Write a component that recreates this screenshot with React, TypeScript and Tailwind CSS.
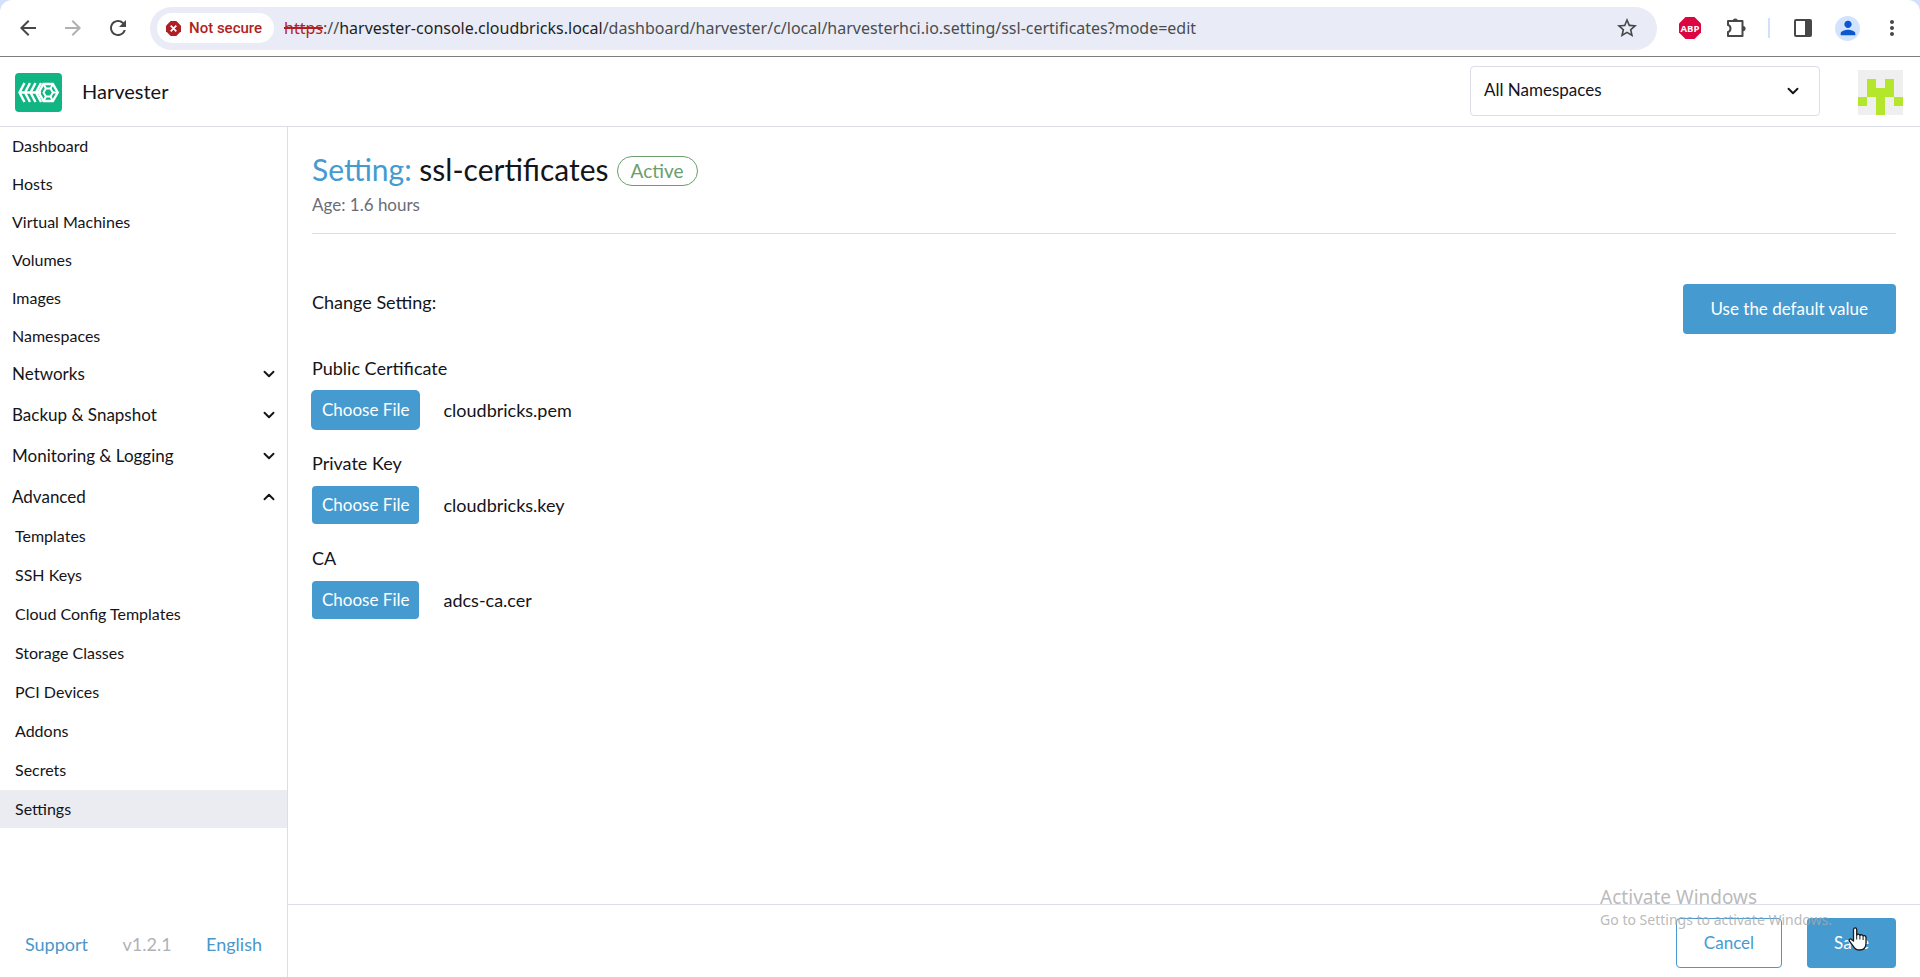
import { ChevronDown, ChevronUp } from "lucide-react";
import { MdArrowBack, MdArrowForward, MdRefresh, MdStarBorder, MdMoreVert, MdPerson } from "react-icons/md";

const topLinks = ["Dashboard", "Hosts", "Virtual Machines", "Volumes", "Images", "Namespaces"];
const groups = ["Networks", "Backup & Snapshot", "Monitoring & Logging"];
const advancedLinks = [
  "Templates",
  "SSH Keys",
  "Cloud Config Templates",
  "Storage Classes",
  "PCI Devices",
  "Addons",
  "Secrets",
  "Settings",
];
const files = [
  { id: "public-certificate", label: "Public Certificate", file: "cloudbricks.pem", focused: true },
  { id: "private-key", label: "Private Key", file: "cloudbricks.key", focused: false },
  { id: "ca", label: "CA", file: "adcs-ca.cer", focused: false },
];

function HarvesterLogo() {
  return (
    <svg viewBox="0 0 47 39" className="h-[39px] w-[47px] shrink-0" aria-hidden="true">
      <rect width="47" height="39" rx="4" fill="#11b583" />
      <g fill="none" stroke="#fff" strokeWidth="2.4">
        <path d="M9.500 10 4.500 19.500l5 9.500M15 10l-5 9.500 5 9.500M20.500 10l-5 9.500 5 9.500M26 10l-5 9.500 5 9.500M4 19.500h22" />
        <path d="M28.500 11h9.400l4.800 8.500-4.800 8.500h-9.400l-4.800-8.500z" />
        <path d="M30.900 15.500h4.600l2.400 4-2.400 4h-4.600l-2.400-4z" strokeWidth="2" />
        <path d="m30.900 15.500-2.400-4.500M35.500 15.500l2.400-4.500M37.900 19.500h4.800M35.500 23.500l2.400 4.500M30.900 23.500 28.500 28" strokeWidth="2" />
      </g>
    </svg>
  );
}

function Avatar() {
  return (
    <svg viewBox="0 0 5 5" className="size-[45px] shrink-0" shapeRendering="crispEdges" role="img" aria-label="User">
      <path fill="#efefef" d="M0 0h5v5H0z" />
      <path fill="#b4e62c" d="M1 1h1v1h1V1h1v2H3v2H2V3H1zM0 3h1v1H0zM4 3h1v1H4z" />
    </svg>
  );
}

function PuzzleIcon() {
  return (
    <svg viewBox="0 0 24 24" className="size-6" aria-hidden="true">
      <path
        fill="none"
        stroke="currentColor"
        strokeWidth="2"
        strokeLinejoin="round"
        d="M4 5h14.500v15H4v-4c3.300-.6 3.300-6.400 0-7z"
      />
      <path fill="currentColor" d="M8.700 5a2.600 2.600 0 0 1 5.200 0zM19 10a2.600 2.600 0 0 1 0 5.200z" />
    </svg>
  );
}

function BrowserBar() {
  return (
    <div className="bg-[#d3e0fb]">
      <div className="flex h-[57px] items-center rounded-t-xl border-b border-[#7d7d7f] bg-white px-4 text-[#474747]">
        <div className="flex w-[134px] shrink-0 items-center gap-[21px]">
          <button aria-label="Back"><MdArrowBack size={24} /></button>
          <button aria-label="Forward" className="text-[#b0b0b0]"><MdArrowForward size={24} /></button>
          <button aria-label="Reload"><MdRefresh size={24} /></button>
        </div>
        <div className="flex h-[43px] min-w-0 flex-1 items-center rounded-full bg-[#e9ecf6] pr-[18px] pl-[7px]">
          <button className="flex h-[30px] shrink-0 items-center gap-2 rounded-full bg-white pr-3 pl-[9px] font-['Roboto',sans-serif] text-[15px] font-medium text-[#b01f24]">
            <svg viewBox="0 0 16 16" className="size-[15px]" aria-hidden="true">
              <path fill="#b01f24" d="M5 0h6l5 5v6l-5 5H5l-5-5V5z" />
              <path stroke="#fff" strokeWidth="1.800" d="m5 5 6 6M11 5l-6 6" />
            </svg>
            Not secure
          </button>
          <div className="min-w-0 flex-1 truncate pl-[10px] font-['Noto_Sans',sans-serif] text-[16px] text-[#4a4c50]">
            <span className="text-[#b01f24] line-through decoration-2">https</span>://
            <span className="text-[#1f1f1f]">harvester-console.cloudbricks.local</span>
            /dashboard/harvester/c/local/harvesterhci.io.setting/ssl-certificates?mode=edit
          </div>
          <button aria-label="Bookmark"><MdStarBorder size={24} /></button>
        </div>
        <div className="flex shrink-0 items-center pl-[22px]">
          <button aria-label="Adblock Plus">
            <svg viewBox="0 0 22 22" className="size-[22px]" aria-hidden="true">
              <path fill="#dd0541" d="M6.500 0h9L22 6.500v9L15.500 22h-9L0 15.500v-9z" />
              <text x="11" y="14.500" textAnchor="middle" fill="#fff" fontSize="9.500" fontWeight="700" fontFamily="Open Sans, sans-serif">ABP</text>
            </svg>
          </button>
          <button aria-label="Extensions" className="ml-[23px]"><PuzzleIcon /></button>
          <span className="ml-5 h-5 w-0.5 bg-[#d3e0fb]" />
          <button aria-label="Side panel" className="ml-6">
            <svg viewBox="0 0 18 18" className="size-[18px]" aria-hidden="true">
              <rect x="1" y="1" width="16" height="16" rx="1" fill="none" stroke="currentColor" strokeWidth="2" />
              <path fill="currentColor" d="M11 1h6v16h-6z" />
            </svg>
          </button>
          <button aria-label="Profile" className="ml-[23px] flex size-[25px] items-center justify-center rounded-full bg-[#d3e3fd] text-[#0b57d0]">
            <MdPerson size={22} />
          </button>
          <button aria-label="Menu" className="ml-5"><MdMoreVert size={24} /></button>
        </div>
      </div>
    </div>
  );
}

function Header() {
  return (
    <header className="flex h-[70px] items-center justify-between border-b border-[#dcdee7] pt-px pr-[17px] pl-[15px]">
      <div className="flex items-center gap-5">
        <HarvesterLogo />
        <span className="pb-0.5 text-[20px]">Harvester</span>
      </div>
      <div className="flex items-center gap-[38px]">
        <div className="relative mb-0.5 flex items-center">
          <select aria-label="Namespace filter" className="h-[50px] w-[350px] appearance-none rounded border border-[#dcdee7] bg-white px-[13px] pb-0.5 text-[17px]">
            <option>All Namespaces</option>
          </select>
          <ChevronDown size={18} strokeWidth={2.5} className="pointer-events-none absolute right-[18px]" />
        </div>
        <Avatar />
      </div>
    </header>
  );
}

function Sidebar() {
  return (
    <nav className="flex w-[288px] shrink-0 flex-col border-r border-[#dcdee7]">
      <ul className="flex flex-col gap-px text-[16px]">
        {topLinks.map((name) => (
          <li key={name}>
            <a href="#" className="flex h-[37px] items-center px-3">{name}</a>
          </li>
        ))}
      </ul>
      {groups.map((name) => (
        <button key={name} aria-expanded="false" className="flex h-[41px] items-center justify-between pr-[9px] pb-0.5 pl-3 text-[17px]">
          {name}
          <ChevronDown size={18} strokeWidth={2.5} />
        </button>
      ))}
      <button aria-expanded="true" className="flex h-[41px] items-center justify-between pr-[9px] pb-0.5 pl-3 text-[17px]">
        Advanced
        <ChevronUp size={18} strokeWidth={2.5} />
      </button>
      <ul className="-mt-px flex flex-col gap-px text-[16px]">
        {advancedLinks.map((name) => (
          <li key={name}>
            <a
              href="#"
              aria-current={name === "Settings" ? "page" : undefined}
              className="flex h-[38px] items-center px-[15px] aria-[current=page]:bg-[#ebecf2]"
            >
              {name}
            </a>
          </li>
        ))}
      </ul>
      <div className="mt-auto flex h-[66px] items-center justify-between px-[25px] text-[18px]">
        <a href="#" className="text-[#4a97c9]">Support</a>
        <span className="text-[#b0b1b8]">v1.2.1</span>
        <a href="#" className="text-[#4a97c9]">English</a>
      </div>
    </nav>
  );
}

export default function App() {
  return (
    <div className="flex min-h-screen flex-col bg-white font-['Lato',sans-serif] text-[#141419]">
      <BrowserBar />
      <Header />
      <div className="flex flex-1">
        <Sidebar />
        <div className="flex min-w-0 flex-1 flex-col">
          <main className="flex-1 px-6 pt-6">
            <div className="border-b border-[#dcdee7] pb-4">
              <div className="flex items-center gap-2">
                <h1 className="text-[30px] leading-9">
                  <span className="text-[#459bd0]">Setting:</span> ssl-certificates
                </h1>
                <span className="mt-1 flex h-[30px] items-center rounded-full border border-[#6b9e6c] px-[13px] text-[19px] text-[#6b9e6c]">Active</span>
              </div>
              <p className="mt-[6px] text-[17px] leading-6 text-[#6c6c76]">Age: 1.6 hours</p>
            </div>
            <div className="mt-[50px] flex items-start justify-between">
              <h2 className="pt-[6px] text-[18px] leading-6">Change Setting:</h2>
              <button className="h-[50px] rounded bg-[#459bd0] px-7 text-[17px] text-white">Use the default value</button>
            </div>
            <div className="mt-[22px] flex flex-col gap-[22px]">
              {files.map((row) => (
                <div key={row.id} className="flex flex-col items-start gap-[11px]">
                  <label htmlFor={row.id} className="text-[18px] leading-6">{row.label}</label>
                  <div className="flex items-center gap-6">
                    <button
                      id={row.id}
                      data-focused={row.focused}
                      className="h-[38px] rounded bg-[#459bd0] px-[10px] text-[17px] text-white ring-[#459bd0] data-[focused=true]:ring-1"
                    >
                      Choose File
                    </button>
                    <span className="text-[18px]">{row.file}</span>
                  </div>
                </div>
              ))}
            </div>
          </main>
          <footer className="relative flex h-[73px] items-start justify-end gap-[25px] border-t border-[#dcdee7] px-6 pt-[13px]">
            <button className="h-[50px] rounded border border-[#459bd0] px-[27px] text-[17px] text-[#459bd0]">Cancel</button>
            <button className="h-[50px] rounded bg-[#459bd0] px-[27px] text-[17px] text-white">Save</button>
            <div className="pointer-events-none absolute -top-5 right-[88px] font-['Noto_Sans',sans-serif] text-[#a8a8a8]/80">
              <p className="text-[19px] leading-6">Activate Windows</p>
              <p className="text-[14px] leading-[22px]">Go to Settings to activate Windows.</p>
            </div>
            <svg viewBox="0 0 20 24" className="pointer-events-none absolute top-[22px] right-[52px] h-6 w-5" aria-hidden="true">
              <path
                fill="#fff"
                stroke="#1a1a1a"
                strokeWidth="1.300"
                strokeLinejoin="round"
                d="M5.500 14V2.500a1.600 1.600 0 0 1 3.200 0V8c.3-1.300 3-1.200 3.200.500.400-1.200 3-1 3.200.700.500-1 2.900-.800 2.900 1.300v5.500c0 4-2 7-6.500 7-4 0-5.200-2-6.500-4.200L1.300 14c-.800-1.500.900-2.700 2.200-1.600z"
              />
              <path stroke="#1a1a1a" d="M8.700 8v4.500M11.900 8.500v4M15.100 9.500v3.500" />
            </svg>
          </footer>
        </div>
      </div>
    </div>
  );
}
